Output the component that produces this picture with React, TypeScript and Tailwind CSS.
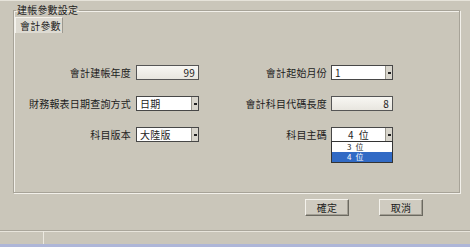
import React from "react";

function Select({ value, pad = "pl-[3px]", children }: { value: string; pad?: string; children?: React.ReactNode }) {
  return (
    <div className="relative flex h-[15px] w-full border border-[#474747] bg-white">
      <div className={`flex-1 ${pad} leading-[13px] whitespace-pre`}>{value}</div>
      <div className="flex w-[7px] items-center justify-center border-l border-[#9a978d] bg-[#d8d5cc]">
        <div className="h-[2px] w-[3px] bg-[#222]" />
      </div>
      {children}
    </div>
  );
}

function ReadOnly({ value }: { value: string }) {
  return (
    <div className="h-[15px] w-full border border-[#555] bg-gradient-to-b from-[#f8f7f3] to-[#e8e6df] pr-[3px] text-right leading-[13px]">
      {value}
    </div>
  );
}

function Label({ text, pr }: { text: string; pr: string }) {
  return <div className={`h-[15px] text-right leading-[15px] whitespace-nowrap ${pr}`}>{text}</div>;
}

function Btn({ text }: { text: string }) {
  return (
    <div className="flex h-[17px] w-[44px] items-center justify-center border-t border-l border-r border-b border-t-[#f4f2ec] border-l-[#f4f2ec] border-r-[#6b6960] border-b-[#6b6960] bg-[#cfcbc0] shadow-[inset_-1px_-1px_0_#a29e93] leading-[15px]">
      {text}
    </div>
  );
}

export default function App() {
  return (
    <div className="relative flex h-[247px] w-[470px] flex-col overflow-hidden border-t border-[#e6e3da] bg-[#cac6ba] font-['Noto_Sans_CJK_TC','Noto_Sans_CJK_SC',sans-serif] text-[10px] tracking-[0.2px] text-[#1c1c1c]">
      <fieldset className="ml-[13px] mt-[2px] h-[190px] w-[447px] border border-[#a7a398] shadow-[inset_1px_1px_0_#f2f0ea,1px_1px_0_#f2f0ea]">
        <legend className="ml-[2px] px-[1px] leading-[14px]">建帳參數設定</legend>
        <div className="ml-[1px] flex h-[16px] w-[48px] items-center border-t border-l border-r border-t-[#f4f2ec] border-l-[#f4f2ec] border-r-[#9d998f] bg-[#dedbd2] pl-[4px] leading-[14px]">
          會計參數
        </div>
        <div className="mt-[32px] grid grid-cols-[122px_63px_132px_62px] gap-y-[16px]">
          <Label text="會計建帳年度" pr="pr-[5px]" />
          <ReadOnly value="99" />
          <Label text="會計起始月份" pr="pr-[4px]" />
          <Select value="1" />

          <Label text="財務報表日期查詢方式" pr="pr-[5px]" />
          <Select value="日期" />
          <Label text="會計科目代碼長度" pr="pr-[4px]" />
          <ReadOnly value="8" />

          <Label text="科目版本" pr="pr-[5px]" />
          <Select value="大陸版" />
          <Label text="科目主碼" pr="pr-[4px]" />
          <Select value={"4  位"} pad="pl-[16px]">
            <div className="absolute left-[-1px] top-full z-10 w-[62px] border border-[#333] bg-white">
              <div className="h-[10px] pl-[15px] text-[8px] leading-[10px] whitespace-pre">{"3  位"}</div>
              <div className="h-[10px] bg-[#316ac5] pl-[15px] text-[8px] leading-[10px] text-white whitespace-pre">{"4  位"}</div>
            </div>
          </Select>
        </div>
      </fieldset>
      <div className="mt-[6px] flex gap-[30px] pl-[305px]">
        <Btn text="確定" />
        <Btn text="取消" />
      </div>
      <div className="mt-auto flex h-[14px] border-t border-[#aaa69b] shadow-[inset_0_1px_0_#e8e5dc]">
        <div className="w-[44px] border-r border-[#ece9e1]" />
        <div className="flex-1" />
      </div>
      <div className="h-[3px] bg-[#aeb6d8]" />
    </div>
  );
}
